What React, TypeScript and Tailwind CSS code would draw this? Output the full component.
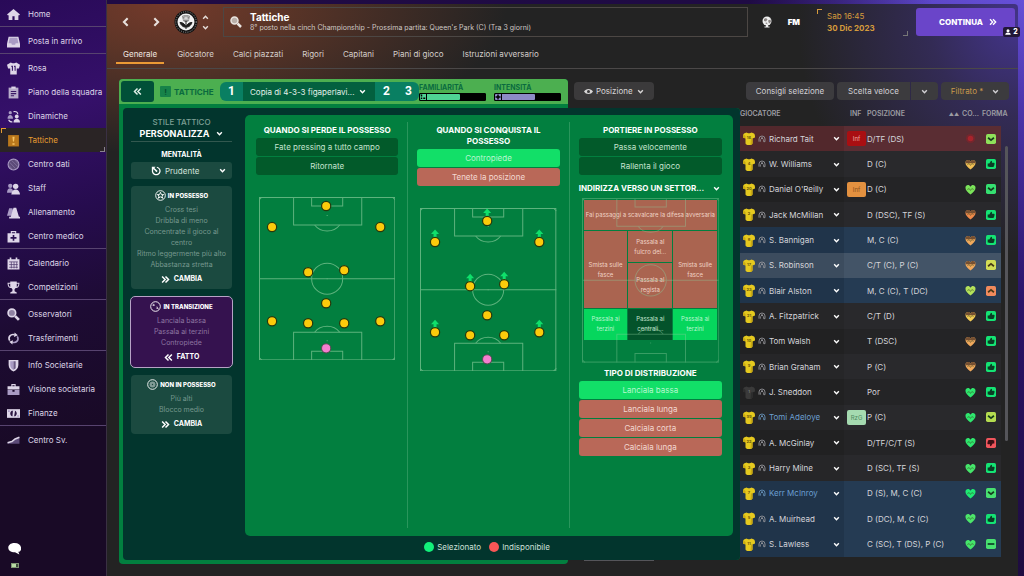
import type { ReactNode } from "react";

type IconProps = { children: ReactNode; className?: string };

function Icon({ children, className = "size-[13px]" }: IconProps) {
  return (
    <svg viewBox="0 0 24 24" className={`shrink-0 ${className}`} fill="currentColor" aria-hidden="true">
      {children}
    </svg>
  );
}

function Chevron({ dir = "down", className = "size-2" }: { dir?: "down" | "up" | "left" | "right"; className?: string }) {
  const paths = {
    down: "M4 8l8 8 8-8",
    up: "M4 16l8-8 8 8",
    left: "M16 3l-9 9 9 9",
    right: "M8 3l9 9-9 9",
  };
  return (
    <Icon className={className}>
      <path d={paths[dir]} fill="none" stroke="currentColor" strokeWidth="5" />
    </Icon>
  );
}

function DoubleChevron({ dir, className = "size-[9px]" }: { dir: "left" | "right"; className?: string }) {
  return (
    <Icon className={className}>
      <path
        d={dir === "left" ? "M12 4l-8 8 8 8M21 4l-8 8 8 8" : "M3 4l8 8-8 8M12 4l8 8-8 8"}
        fill="none"
        stroke="currentColor"
        strokeWidth="4"
      />
    </Icon>
  );
}

const tone = "#a99bc4";

const navGroups: { label: string; icon: ReactNode; active?: boolean }[][] = [
  [{ label: "Home", icon: <path d="M12 2L0 12l2 2 1-1v9h7v-7h4v7h7v-9l1 1 2-2z" /> }],
  [
    {
      label: "Posta in arrivo",
      icon: (
        <>
          <path d="M3 3h18l3 13v7H0v-7z" />
          <path d="M5 5h14l2 10h-5l-1 3H9l-1-3H3z" fill={tone} />
        </>
      ),
    },
  ],
  [
    {
      label: "Rosa",
      icon: (
        <>
          <path d="M7 1L0 5l2 7h4v11h12V12h4l2-7-7-4c-2 2-8 2-10 0z" />
          <path d="M8 7h3v9H9V9H8zM13 7h3v9h-2V9h-1z" fill="#3a1a66" />
        </>
      ),
    },
    {
      label: "Piano della squadra",
      icon: (
        <>
          <path d="M3 3h18v20H3z" fill="#b9aecb" />
          <path d="M8 1h8v4H8z" />
          <path d="M7 9h10v2H7zM7 13h10v2H7zM7 17h6v2H7z" fill="#3a1a66" />
        </>
      ),
    },
    {
      label: "Dinamiche",
      icon: (
        <>
          <circle cx="6" cy="5" r="3" fill={tone} />
          <path d="M1 16c0-9 10-9 10 0z" fill={tone} />
          <circle cx="18" cy="12" r="3.5" />
          <path d="M12 23c0-9 12-9 12 0z" />
          <path d="M12 3c5-1 8 1 8 5M3 18c1 3 3 4 7 4" fill="none" stroke="currentColor" strokeWidth="2" />
        </>
      ),
    },
    {
      label: "Tattiche",
      active: true,
      icon: (
        <>
          <path d="M2 2h20v21H2z" fill="#b9781c" />
          <path d="M10 5h4l-1 9h-2zM10 17h4v3h-4z" fill="#f6c463" />
        </>
      ),
    },
    {
      label: "Centro dati",
      icon: (
        <>
          <circle cx="12" cy="12" r="10" fill="#5c4b78" stroke="#a99bc4" strokeWidth="2" />
          <path d="M5 8l11 12M8 4l12 12M4 14l6 7M14 3l7 8" stroke="#8474a0" strokeWidth="1.5" />
        </>
      ),
    },
    {
      label: "Staff",
      icon: (
        <>
          <circle cx="6" cy="7" r="4" fill={tone} />
          <path d="M0 20c0-11 11-11 12 0z" fill={tone} />
          <circle cx="16" cy="8" r="5" />
          <path d="M8 23c1-7 5-9 8-9s7 2 8 9z" />
        </>
      ),
    },
    {
      label: "Allenamento",
      icon: (
        <>
          <path d="M4 4h6l4 14H0z" fill={tone} />
          <path d="M12 3h5l5 17h2v3H4v-3h3z" />
        </>
      ),
    },
    {
      label: "Centro medico",
      icon: (
        <>
          <path d="M7 2h10v4h6v17H1V6h6zM9 4v2h6V4z" fillRule="evenodd" />
          <path d="M10.500 9h3v4h4v3h-4v4h-3v-4h-4v-3h4z" fill="#2a1050" />
        </>
      ),
    },
  ],
  [
    {
      label: "Calendario",
      icon: (
        <>
          <path d="M1 4h4V1h3v3h8V1h3v3h4v19H1z" />
          <path d="M4 9h16M4 14h16M4 19h16M8 9v12M13 9v12M18 9v12" stroke="#4a3568" strokeWidth="1.3" />
        </>
      ),
    },
    {
      label: "Competizioni",
      icon: <path d="M6 1h12v2h5c0 7-3 10-7 10l-2 2v4l4 2v2H6v-2l4-2v-4l-2-2C4 13 1 10 1 3h5zM3 5c0 3 1 5 3 6V5zm15 0v6c2-1 3-3 3-6z" />,
    },
  ],
  [
    {
      label: "Osservatori",
      icon: (
        <>
          <circle cx="9" cy="9" r="7" fill="#8f82a3" stroke="currentColor" strokeWidth="3" />
          <path d="M15 15l7 7" stroke="currentColor" strokeWidth="5" />
        </>
      ),
    },
    {
      label: "Trasferimenti",
      icon: (
        <>
          <path d="M5 16C1 9 7 3 14 5" fill="none" stroke="currentColor" strokeWidth="3" />
          <path d="M19 8c4 7-2 13-9 11" fill="none" stroke={tone} strokeWidth="3" />
          <path d="M14 1l6 5-7 3zM10 23l-6-5 7-3z" />
        </>
      ),
    },
  ],
  [
    {
      label: "Info Societarie",
      icon: (
        <>
          <path d="M3 2h18v9c0 6-4 10-9 12-5-2-9-6-9-12z" />
          <path d="M12 4H6v7c0 4 2 7 6 9z" fill={tone} />
          <path d="M12 4h4v13l-4 3z" fill="#6c5c86" />
        </>
      ),
    },
    {
      label: "Visione societaria",
      icon: (
        <>
          <path d="M8 2h8v4h7v6H1V6h7zM10 4v2h4V4z" fillRule="evenodd" />
          <path d="M1 13h9v3h4v-3h9v9H1z" fill={tone} />
        </>
      ),
    },
    {
      label: "Finanze",
      icon: (
        <>
          <path d="M0 4h24v16H0z" />
          <path d="M9 7c-4 2-4 8 0 10h6c4-2 4-8 0-10z" fill="#2a1440" />
          <path d="M11 6h4l-2 12h-3z" />
          <path d="M2 6h3v3H2zM19 15h3v3h-3z" fill={tone} />
        </>
      ),
    },
  ],
  [
    {
      label: "Centro Sv.",
      icon: (
        <>
          <path d="M1 18v-2l8-1 7-6 7-2v11z" fill="#5c4b78" />
          <path d="M1 16l8-2 6-5 8-3" fill="none" stroke="currentColor" strokeWidth="3" />
        </>
      ),
    },
  ],
];

function Sidebar() {
  return (
    <aside className="flex w-[107px] shrink-0 flex-col border-r border-[#3a3043] bg-[linear-gradient(165deg,#290a58_0%,#35106a_20%,#260c4e_38%,#1d0b33_55%,#190a26_75%)] pt-[2px]">
      <nav aria-label="Menu principale">
        {navGroups.map((group, i) => (
          <ul key={i} className={i ? "border-t border-[#57436f] pt-[2px]" : ""}>
            {group.map((item) => (
              <li key={item.label}>
                <a
                  href="#"
                  className={
                    item.active
                      ? "relative flex h-6 items-center gap-2 bg-[#2a2425] pl-[7px] text-[8px] text-[#e69c31]"
                      : "relative flex h-6 items-center gap-2 pl-[7px] text-[8px] text-[#ded6e8]"
                  }
                >
                  {item.active && (
                    <>
                      <span className="absolute top-0 left-px size-[5px] border-t border-l border-[#e69c31]" />
                      <span className="absolute right-px bottom-0 size-[5px] border-r border-b border-[#8a8290]" />
                    </>
                  )}
                  <Icon className="size-[13px]">{item.icon}</Icon>
                  <span className="whitespace-nowrap">{item.label}</span>
                </a>
              </li>
            ))}
          </ul>
        ))}
      </nav>
      <div className="mt-auto flex flex-col items-start gap-2 pb-[8px] pl-2 text-white">
        <button type="button" aria-label="Messaggi" className="flex">
          <Icon className="size-[13px]">
            <path d="M12 2c15 0 15 16 7 16l2 5-8-4C-4 19-3 2 12 2z" />
          </Icon>
        </button>
        <span className="ml-[3px] flex h-[5px] w-2 border border-[#7f9474] bg-[#3d4a3c]">
          <span className="w-1 bg-[#b8dba4]" />
        </span>
      </div>
    </aside>
  );
}

function Crest() {
  return (
    <svg viewBox="0 0 48 48" className="size-6 shrink-0" aria-label="Stemma del club" role="img">
      <circle cx="24" cy="24" r="23" fill="#111" />
      <circle cx="24" cy="24" r="20.500" fill="none" stroke="#9a9a9a" strokeWidth="2" strokeDasharray="2 2.500" />
      <circle cx="24" cy="24" r="17" fill="#f1f1f1" />
      <path d="M16 12c5-3 11-3 16 0l-2 9c-3 4-9 4-12 0z" fill="#8a8a8a" />
      <path d="M19 13l10 6M29 13l-10 6M19 18h10M24 11v9" stroke="#e4e4e4" strokeWidth="1.500" />
      <path d="M24 22v16M24 34c-5 1-10-3-12-9 6 0 10 3 12 9zM24 34c5 1 10-3 12-9-6 0-10 3-12 9z" fill="#1c1c1c" stroke="#1c1c1c" strokeWidth="2" />
    </svg>
  );
}

const tabs = ["Generale", "Giocatore", "Calci piazzati", "Rigori", "Capitani", "Piani di gioco", "Istruzioni avversario"];

function Header() {
  return (
    <header className="border-b border-[#4b4848]">
      <div className="flex h-9 items-center pr-[3px]">
        <button type="button" aria-label="Indietro" className="ml-[14px] text-[#e8e0dc]">
          <Chevron dir="left" className="size-[10px]" />
        </button>
        <button type="button" aria-label="Avanti" className="ml-5 text-[#e8e0dc]">
          <Chevron dir="right" className="size-[10px]" />
        </button>
        <span className="ml-[13px]">
          <Crest />
        </span>
        <span className="ml-1 flex flex-col gap-[3px] text-[#e8e0dc]">
          <button type="button" aria-label="Squadra precedente" className="flex">
            <Chevron dir="up" className="size-[7px]" />
          </button>
          <button type="button" aria-label="Squadra successiva" className="flex">
            <Chevron dir="down" className="size-[7px]" />
          </button>
        </span>
        <div className="ml-[14px] flex h-[30px] min-w-0 flex-1 items-center gap-2 border border-[#4c4744] pl-[6px]">
          <button type="button" aria-label="Cerca" className="text-[#e9e4e0]">
            <Icon className="size-3">
              <circle cx="9" cy="9" r="7" fill="#b9afa9" stroke="currentColor" strokeWidth="3" />
              <path d="M15 15l7 7" stroke="currentColor" strokeWidth="5" />
            </Icon>
          </button>
          <div className="min-w-0">
            <h1 className="text-[10px] leading-3 font-bold text-white">Tattiche</h1>
            <p className="truncate text-[7px] leading-[10px] text-[#cfc9c5]">
              8° posto nella cinch Championship - Prossima partita: Queen's Park (C) (Tra 3 giorni)
            </p>
          </div>
        </div>
        <button type="button" aria-label="Mondo" className="ml-[13px] text-[#eeeeee]">
          <Icon className="size-3">
            <circle cx="12" cy="10" r="9" />
            <path d="M6 6l4-2 3 3-3 4-4-1zM14 9l5-2 1 5-4 3zM8 14l4-1 1 4" fill="#8a8583" />
            <path d="M10 18h4v3h3v2H7v-2h3z" />
          </Icon>
        </button>
        <a href="#" className="ml-[15px] text-[8px] font-black text-white">
          FM
        </a>
        <div className="relative ml-[17px] flex h-[27px] w-[91px] flex-col justify-center pl-[10px] text-[#d59b3c]">
          <span className="absolute top-0 left-0 size-[5px] border-t border-l border-[#d59b3c]" />
          <span className="absolute right-0 bottom-0 size-[5px] border-r border-b border-[#777]" />
          <span className="text-[8px] leading-3">Sab 16:45</span>
          <span className="text-[8px] leading-3 font-bold">30 Dic 2023</span>
        </div>
        <button
          type="button"
          className="relative ml-2 flex h-7 w-[99px] items-center justify-end gap-[6px] rounded-[3px] bg-[#6a45c9] pr-[18px] text-[8px] font-extrabold text-white"
        >
          CONTINUA
          <DoubleChevron dir="right" className="size-2" />
          <span className="absolute -right-[5px] -bottom-px flex h-[10px] w-[17px] items-center justify-center gap-[2px] rounded-[2px] bg-[#221838] text-[7px]">
            <Icon className="size-[6px]">
              <circle cx="12" cy="7" r="6" />
              <path d="M1 23c0-12 22-12 22 0z" />
            </Icon>
            2
          </span>
        </button>
      </div>
      <nav aria-label="Sezioni" className="flex h-7 items-start gap-[7px] pl-[9px]">
        {tabs.map((tab, i) => (
          <a
            key={tab}
            href="#"
            className={
              i === 0
                ? "flex h-6 items-center border-b-2 border-[#eb9a35] px-[7px] pt-[5px] text-[8px] whitespace-nowrap text-[#f0e6e0]"
                : "flex h-6 items-center border-b-2 border-transparent px-[6px] pt-[5px] text-[8px] whitespace-nowrap text-[#d5cfcb]"
            }
          >
            {tab}
          </a>
        ))}
      </nav>
    </header>
  );
}

function Meter({ label, color, width, icon }: { label: string; color: string; width: string; icon: ReactNode }) {
  return (
    <div className="w-[67px] shrink-0">
      <p className="text-[7px] leading-[10px] font-bold whitespace-nowrap text-[#0a6b3f]">{label}</p>
      <div className="flex h-2 rounded-[1px] border border-black bg-black">
        <span className={`flex items-center rounded-[1px] ${color} ${width}`}>
          <span className="flex h-full w-[7px] items-center border-r border-black text-black">{icon}</span>
        </span>
      </div>
    </div>
  );
}

const slotClass = "shrink-0 font-[Roboto,sans-serif] text-[12px] leading-[19px] font-bold";

function TacticsBar() {
  return (
    <div className="flex h-[25px] shrink-0 items-center rounded-t-[4px] bg-[#4caf50] pr-[7px] pl-[2px]">
      <button
        type="button"
        aria-label="Riduci pannello"
        className="flex h-[21px] w-[33px] shrink-0 items-center justify-center rounded-[3px] bg-[#015038] text-[#e0f0e8]"
      >
        <DoubleChevron dir="left" />
      </button>
      <span className="ml-[6px] flex size-[11px] shrink-0 items-center justify-center rounded-[1px] bg-[#178249] text-[8px] font-bold text-[#04512f]">
        !
      </span>
      <span className="ml-[3px] w-[46px] shrink-0 text-[8px] font-bold text-[#0a6b3f]">TATTICHE</span>
      <div className="flex h-[19px] min-w-0 flex-1 overflow-hidden rounded-[6px] bg-[#097f62] text-white">
        <button type="button" className={`${slotClass} w-[23px]`}>
          1
        </button>
        <div className="relative flex min-w-0 flex-1 items-center bg-[#03603f]">
          <select
            aria-label="Tattica"
            className="h-full w-full appearance-none bg-transparent pr-[14px] pl-[7px] text-[8px] text-[#e3f1ea] outline-none"
          >
            <option>Copia di 4-3-3 figaperlavi...</option>
          </select>
          <span className="pointer-events-none absolute right-[9px]">
            <Chevron className="size-[7px]" />
          </span>
        </div>
        <button type="button" className={`${slotClass} w-[23px]`}>
          2
        </button>
        <button type="button" className={`${slotClass} w-[21px]`}>
          3
        </button>
      </div>
      <div className="flex shrink-0 gap-2">
        <Meter
          label="FAMILIARITÀ"
          color="bg-[#4fd394]"
          width="w-10"
          icon={
            <Icon className="size-[6px]">
              <path d="M3 2h6v8H3zM3 14h6v6H3zM13 14h8v6h-8z" />
            </Icon>
          }
        />
        <Meter
          label="INTENSITÀ"
          color="bg-[#8d8bc6]"
          width="w-10"
          icon={
            <Icon className="size-[6px]">
              <path d="M9 2h6v7h7v6h-7v7H9v-7H2V9h7z" />
            </Icon>
          }
        />
      </div>
    </div>
  );
}

const phases = [
  {
    title: "IN POSSESSO",
    lines: ["Cross tesi", "Dribbla di meno", "Concentrate il gioco al centro", "Ritmo leggermente più alto", "Abbastanza stretta"],
    action: "CAMBIA",
    icon: (
      <path
        d="M12 5l2 5h5l-4 3 2 5-5-3-5 3 2-5-4-3h5z"
        fill="none"
      />
    ),
  },
  {
    title: "IN TRANSIZIONE",
    lines: ["Lanciala bassa", "Passala ai terzini", "Contropiede"],
    action: "FATTO",
    active: true,
    icon: <path d="M5 9h6M8 6v5M13 15l5 2M15 12l3 5" opacity="0.7" />,
  },
  {
    title: "NON IN POSSESSO",
    lines: ["Più alti", "Blocco medio"],
    action: "CAMBIA",
    icon: <circle cx="12" cy="12" r="4" opacity="0.45" strokeWidth="5" />,
  },
];

function StylePanel() {
  return (
    <div className="flex w-[101px] shrink-0 flex-col text-center">
      <p className="pt-[2px] text-[8px] leading-[11px] font-medium text-[#7fa096]">STILE TATTICO</p>
      <button
        type="button"
        className="flex h-[14px] items-center justify-center gap-[7px] border-b border-[#32584f] pb-[3px] text-[9px] leading-[11px] font-bold text-white"
      >
        PERSONALIZZA
        <Chevron className="size-[7px]" />
      </button>
      <label htmlFor="mentality" className="mt-[7px] text-[7px] leading-[11px] font-bold text-white">
        MENTALITÀ
      </label>
      <div className="relative mt-[2px] mb-[7px] flex h-[17px] items-center rounded-[3px] bg-[#1b4a40] text-white">
        <span className="pointer-events-none absolute left-5">
          <Icon className="size-[10px]">
            <path d="M5 7a9 9 0 1 0 9-4" fill="none" stroke="currentColor" strokeWidth="3" />
            <path d="M2 2h9l-3 3 8 7-3 3-7-8-4 3z" />
          </Icon>
        </span>
        <select
          id="mentality"
          className="h-full w-full appearance-none bg-transparent pl-[34px] text-[8px] text-[#d3e2dc] outline-none"
        >
          <option>Prudente</option>
        </select>
        <span className="pointer-events-none absolute right-[6px]">
          <Chevron className="size-[7px]" />
        </span>
      </div>
      <div className="flex flex-col gap-2">
        {phases.map((p) => (
          <section
            key={p.title}
            className={
              p.active
                ? "rounded-[4px] bg-[#35124f] text-[#8d75a0] outline outline-[#b7a3c6]"
                : "rounded-[4px] bg-[#1b4a40] text-[#76988e]"
            }
          >
            <h3 className="flex h-[18px] items-center justify-center gap-[2px] text-[6px] font-extrabold text-white">
              <svg viewBox="0 0 24 24" className="size-[11px]" fill="none" stroke="currentColor" strokeWidth="2" aria-hidden="true">
                <circle cx="12" cy="12" r="10.500" />
                {p.icon}
              </svg>
              {p.title}
            </h3>
            <div className="px-1 text-[7px] leading-[11px]">
              {p.lines.map((l) => (
                <p key={l}>{l}</p>
              ))}
            </div>
            <button type="button" className="flex h-[19px] w-full items-center justify-center gap-1 text-[7px] font-bold text-white">
              <DoubleChevron dir={p.active ? "left" : "right"} className="size-[9px]" />
              {p.action}
            </button>
          </section>
        ))}
      </div>
    </div>
  );
}

function PitchLines() {
  return (
    <g fill="none" stroke="#8fcf9f" strokeWidth="1" opacity="0.65">
      <rect x="0.500" y="0.500" width="135" height="162" />
      <path d="M0 81.500h136M34.500 0v28h68V0M52.500 0v9h31V0M34.500 163v-28h68v28M52.500 163v-9h31v9" />
      <path d="M55.500 28c6 8 19 8 25 0M55.500 135c6-8 19-8 25 0" />
      <circle cx="68" cy="81.500" r="15.500" />
      <path d="M0 3l3-3M133 0l3 3M0 160l3 3M133 163l3-3" />
      <path d="M67.500 18.500h1M67.500 81.500h1M67.500 143.500h1" />
    </g>
  );
}

type Dot = [number, number, boolean?];

function Pitch({ dots, keeper }: { dots: Dot[]; keeper: [number, number] }) {
  return (
    <svg viewBox="0 0 136 163" className="mt-[22px] w-full px-[3px]" role="img" aria-label="Disposizione in campo">
      <PitchLines />
      {dots.map(([x, y, arrow]) => (
        <g key={`${x}-${y}`}>
          {arrow && <path d={`M${x} ${y - 12.5}l4 4.500h-2.500v4h-3v-4h-2.500z`} fill="#0fe06b" />}
          <circle cx={x} cy={y} r="4.600" fill="#fccb0b" stroke="#27380c" strokeWidth="1.200" />
        </g>
      ))}
      <circle cx={keeper[0]} cy={keeper[1]} r="4.600" fill="#f47fd0" stroke="#5a4a52" strokeWidth="1" />
    </svg>
  );
}

type Tone = "idle" | "on" | "off";
const toneClass: Record<Tone, string> = {
  idle: "bg-[#025a2a] text-[#c5e3cf]",
  on: "bg-[#12df68] text-[#b9f7d0]",
  off: "bg-[#b96858] text-[#f3d9d2]",
};

function Options({ items }: { items: [string, Tone][] }) {
  return (
    <div className="mt-[2px] flex flex-col gap-px">
      {items.map(([label, t]) => (
        <button key={label} type="button" className={`h-[18px] rounded-[3px] text-[8px] ${toneClass[t]}`}>
          {label}
        </button>
      ))}
    </div>
  );
}

function Heading({ children }: { children: ReactNode }) {
  return <h2 className="text-center text-[8px] leading-[11px] font-bold text-white">{children}</h2>;
}

const zoneClass = "flex items-center justify-center px-1 text-center text-[6px] leading-[10px]";
const zoneOff = "bg-[#aa6450] text-[#f0d3c6]";

function Zones() {
  return (
    <div className="relative mx-[3px] mt-1 aspect-[136/163]">
      <div className="grid h-full grid-cols-3 grid-rows-[31fr_31fr_46fr_32fr_20fr] gap-px p-[2px]">
        <button type="button" className={`${zoneClass} ${zoneOff} col-span-3 whitespace-nowrap`}>
          Fai passaggi a scavalcare la difesa avversaria
        </button>
        <button type="button" className={`${zoneClass} ${zoneOff} row-span-2`}>
          Smista sulle fasce
        </button>
        <button type="button" className={`${zoneClass} ${zoneOff}`}>
          Passala al fulcro del...
        </button>
        <button type="button" className={`${zoneClass} ${zoneOff} row-span-2`}>
          Smista sulle fasce
        </button>
        <button type="button" className={`${zoneClass} ${zoneOff}`}>
          Passala al regista
        </button>
        <button type="button" className={`${zoneClass} bg-[#06d65d] text-[#b9f7d0]`}>
          Passala ai terzini
        </button>
        <button type="button" className={`${zoneClass} bg-[#04532b] text-[#c5e3cf]`}>
          Passala ai centrali...
        </button>
        <button type="button" className={`${zoneClass} bg-[#06d65d] text-[#b9f7d0]`}>
          Passala ai terzini
        </button>
      </div>
      <svg viewBox="0 0 136 163" className="pointer-events-none absolute inset-0 size-full opacity-60" aria-hidden="true">
        <PitchLines />
      </svg>
    </div>
  );
}

const lostShape: Dot[] = [
  [67, 9], [13, 30], [121, 30], [49, 75], [85, 73], [67, 106], [13, 124], [121, 124], [49, 126], [85, 126],
];
const wonShape: Dot[] = [
  [67, 13, true], [15, 34, true], [119, 34, true], [50, 78, true], [84, 76, true], [67, 107],
  [15, 124, true], [119, 124, true], [50, 127], [84, 127],
];

function Board() {
  return (
    <div className="flex min-w-0 flex-1 flex-col">
      <div className="grid flex-1 grid-cols-3 divide-x divide-[#2a965c] rounded-[5px] bg-[#027f3f] px-[2px] pt-[7px] pb-2">
        <section className="px-[9px] pt-[3px]">
          <Heading>QUANDO SI PERDE IL POSSESSO</Heading>
          <Options items={[["Fate pressing a tutto campo", "idle"], ["Ritornate", "idle"]]} />
          <Pitch dots={lostShape} keeper={[67, 151]} />
        </section>
        <section className="px-[9px] pt-[3px]">
          <Heading>
            QUANDO SI CONQUISTA IL
            <br />
            POSSESSO
          </Heading>
          <Options items={[["Contropiede", "on"], ["Tenete la posizione", "off"]]} />
          <Pitch dots={wonShape} keeper={[67, 151]} />
        </section>
        <section className="px-[9px] pt-[3px]">
          <Heading>PORTIERE IN POSSESSO</Heading>
          <Options items={[["Passa velocemente", "idle"], ["Rallenta il gioco", "idle"]]} />
          <button
            type="button"
            className="mt-2 flex w-full items-center justify-between pr-[2px] text-[8px] leading-[11px] font-bold whitespace-nowrap text-white"
          >
            INDIRIZZA VERSO UN SETTOR...
            <Chevron className="size-[7px]" />
          </button>
          <Zones />
          <div className="mt-[5px]">
            <Heading>TIPO DI DISTRIBUZIONE</Heading>
            <Options
              items={[["Lanciala bassa", "on"], ["Lanciala lunga", "off"], ["Calciala corta", "off"], ["Calciala lunga", "off"]]}
            />
          </div>
        </section>
      </div>
      <div className="flex h-6 shrink-0 items-center justify-center gap-2 pr-1 pb-[3px] text-[8px] text-[#cfe0d9]">
        <span className="flex items-center gap-[3px]">
          <span className="size-[10px] rounded-full bg-[#12f07a]" />
          Selezionato
        </span>
        <span className="flex items-center gap-[3px]">
          <span className="size-[10px] rounded-full bg-[#f75656]" />
          Indisponibile
        </span>
      </div>
    </div>
  );
}

type Form = "thumb" | "down" | "up" | "bad" | "flat";
type Player = {
  n: string;
  name: string;
  pos: string;
  heart: string;
  form: Form;
  formColor: string;
  row?: "red" | "blue" | "light";
  badge?: { text: string; cls: string };
  link?: boolean;
  keeper?: boolean;
};

const G = "#14e474";
const O = "#f0a95c";
const players: Player[] = [
  { n: "16", name: "Richard Tait", pos: "D/TF (DS)", heart: "injured", form: "down", formColor: "#8fe05a", row: "red", badge: { text: "Inf", cls: "bg-[#a90f12] text-[#f0a8a4]" } },
  { n: "4", name: "W. Williams", pos: "D (C)", heart: "#f2bf55", form: "thumb", formColor: G },
  { n: "20", name: "Daniel O'Reilly", pos: "D (C)", heart: "#7be45a", form: "down", formColor: "#35e070", badge: { text: "Inf", cls: "bg-[#e39140] text-[#8a4f1c]" } },
  { n: "2", name: "Jack McMillan", pos: "D (DSC), TF (S)", heart: "#f08a4a", form: "thumb", formColor: G },
  { n: "8", name: "S. Bannigan", pos: "M, C (C)", heart: O, form: "thumb", formColor: G, row: "blue" },
  { n: "17", name: "S. Robinson", pos: "C/T (C), P (C)", heart: O, form: "up", formColor: "#d3dc55", row: "light" },
  { n: "23", name: "Blair Alston", pos: "M, C (C), T (DC)", heart: "#b4e25a", form: "up", formColor: "#f08a5c", row: "blue" },
  { n: "21", name: "A. Fitzpatrick", pos: "C/T (D)", heart: "#f4cc55", form: "thumb", formColor: G },
  { n: "10", name: "Tom Walsh", pos: "T (DSC)", heart: O, form: "thumb", formColor: G },
  { n: "9", name: "Brian Graham", pos: "P (C)", heart: O, form: "thumb", formColor: G },
  { n: "1", name: "J. Sneddon", pos: "Por", heart: "#2ee86e", form: "thumb", formColor: G, keeper: true },
  { n: "99", name: "Tomi Adeloye", pos: "P (C)", heart: "#2ee86e", form: "down", formColor: "#b4dc50", badge: { text: "RzG", cls: "bg-[#a5dab0] text-[#4d8a60]" }, link: true },
  { n: "22", name: "A. McGinlay", pos: "D/TF/C/T (S)", heart: "#2ee86e", form: "bad", formColor: "#f0555c" },
  { n: "3", name: "Harry Milne", pos: "D (SC), TF (S)", heart: "#45e66a", form: "thumb", formColor: G },
  { n: "7", name: "Kerr McInroy", pos: "D (S), M, C (C)", heart: "#1fea74", form: "down", formColor: "#48e070", row: "blue", link: true },
  { n: "5", name: "A. Muirhead", pos: "D (DC), M, C (C)", heart: "#4ce66a", form: "thumb", formColor: G, row: "blue" },
  { n: "11", name: "S. Lawless", pos: "C (SC), T (DS), P (C)", heart: "#45e66a", form: "flat", formColor: "#48e070", row: "blue" },
];

function Kit({ n, keeper }: { n: string; keeper?: boolean }) {
  return (
    <svg viewBox="0 0 24 26" className="h-[13px] w-3" aria-label={`Maglia ${n}`} role="img">
      <path
        d="M7 1L2 3C0 5 0 8 0 11l5 2v9c0 3 2 4 7 4s7-1 7-4v-9l5-2c0-3 0-6-2-8l-5-2c-2 2-8 2-10 0z"
        fill={keeper ? "#3a3a3a" : "#e6c91f"}
      />
      <path d="M5 13L0 11c0-2 0-4 1-6l4 3zM16 13l3-1v10c0 2-1 3-4 4z" fill={keeper ? "#2c2c2c" : "#c9a812"} />
      <text x="12" y="14" textAnchor="middle" fontSize="8" fontWeight="700" fill={keeper ? "#777" : "#6b560a"}>
        {n}
      </text>
    </svg>
  );
}

function Heart({ color }: { color: string }) {
  if (color === "injured") {
    return (
      <svg viewBox="0 0 24 24" className="size-[11px]" role="img" aria-label="Infortunato">
        <circle cx="12" cy="12" r="10" fill="#8f2027" opacity="0.5" />
        <circle cx="12" cy="12" r="6" fill="#a8242c" />
      </svg>
    );
  }
  const tired = ["#f2bf55", "#f08a4a", O, "#f4cc55"].includes(color);
  return (
    <svg viewBox="0 0 24 24" className="size-[11px]" role="img" aria-label="Condizione">
      <path d="M12 23C5 17 1 13 1 8c0-6 8-8 11-2 3-6 11-4 11 2 0 5-4 9-11 15z" fill={color} />
      {tired && <path d="M1 9c0-7 8-9 11-3 3-6 11-4 11 3z" fill="#765032" />}
      <path d="M5 12l4-2 3 4 3-4 4 2" fill="none" stroke="#3b4a22" strokeWidth="1.500" opacity="0.8" />
    </svg>
  );
}

function FormIcon({ form, color }: { form: Form; color: string }) {
  const thumb = "M4 11h4l4-7c3 0 3 3 2 5h5c2 0 2 3 1 4 1 1 0 3-1 3 0 2-1 3-2 3H9c-2 0-2-1-5-1z";
  return (
    <svg viewBox="0 0 24 24" className="size-[10px]" role="img" aria-label="Forma">
      <rect width="24" height="24" rx="4" fill={color} />
      {form === "thumb" && <path d={thumb} fill="#0b3d25" />}
      {form === "bad" && <path d={thumb} transform="rotate(180 12 12)" fill="#3d0f14" />}
      {form === "down" && <path d="M5 9l7 6 7-6" fill="none" stroke="#173d1e" strokeWidth="4" />}
      {form === "up" && <path d="M5 15l7-6 7 6" fill="none" stroke="#4a3a18" strokeWidth="4" />}
      {form === "flat" && <path d="M4 12h16" stroke="#0b3d25" strokeWidth="4" />}
    </svg>
  );
}

const rowTone = {
  red: ["bg-[#52282c]", "bg-[#5a2d33]"],
  blue: ["bg-[#20344a]", "bg-[#253b53]"],
  light: ["bg-[#3c4c5e]", "bg-[#435467]"],
  even: ["bg-[#212122]", "bg-[#242426]"],
  odd: ["bg-[#262628]", "bg-[#29292c]"],
};

function Squad() {
  return (
    <div className="flex gap-1">
      <table className="h-[451px] min-w-0 flex-1 border-collapse text-[8px] text-[#d5d5da]">
        <thead>
          <tr className="h-5 text-left align-top text-[7px] leading-4 text-[#9c9ca2]">
            <th className="font-semibold" colSpan={2}>GIOCATORE</th>
            <th className="w-[23px] pl-[6px] font-semibold">INF</th>
            <th className="font-semibold">POSIZIONE</th>
            <th className="w-[30px] font-semibold whitespace-nowrap">
              <span className="flex justify-end gap-[3px] pr-[3px]">
                <span className="text-[5px]">▲▲</span>CO...
              </span>
            </th>
            <th className="w-[19px] font-semibold">
              <span className="block w-0">FORMA</span>
            </th>
          </tr>
        </thead>
        <tbody>
          {players.map((p, i) => {
            const [a, b] = rowTone[p.row ?? (i % 2 ? "odd" : "even")];
            return (
              <tr key={p.name} className="h-[25px]">
                <td className={`${a} pl-[3px]`}>
                  <span className="flex items-center gap-[3px] whitespace-nowrap">
                    <Kit n={p.n} keeper={p.keeper} />
                    <Icon className={p.link ? "size-2 text-[#6a96bd]" : "size-2 text-[#99999e]"}>
                      <path d="M3 20v-8a9 9 0 0 1 18 0v8h-4v-7M7 20v-7" fill="none" stroke="currentColor" strokeWidth="2.500" />
                      <circle cx="12" cy="10" r="3" />
                    </Icon>
                    <a href="#" className={p.link ? "text-[#6b9fd0]" : ""}>
                      {p.name}
                    </a>
                  </span>
                </td>
                <td className={`${a} w-4`}>
                  <button type="button" aria-label={`Opzioni per ${p.name}`} className="flex h-4 w-full items-center justify-center text-white">
                    <Chevron className="size-[7px]" />
                  </button>
                </td>
                <td className={`${b} pr-px pl-[3px]`}>
                  {p.badge && (
                    <span className={`flex h-[15px] w-[19px] items-center justify-center rounded-[2px] text-[6px] ${p.badge.cls}`}>
                      {p.badge.text}
                    </span>
                  )}
                </td>
                <td className={`${b} whitespace-nowrap`}>{p.pos}</td>
                <td className={b}>
                  <span className="flex justify-end pr-[6px]">
                    <Heart color={p.heart} />
                  </span>
                </td>
                <td className={b}>
                  <span className="flex justify-end pr-[5px]">
                    <FormIcon form={p.form} color={p.formColor} />
                  </span>
                </td>
              </tr>
            );
          })}
        </tbody>
      </table>
      <div className="mt-10 h-[295px] w-[3px] shrink-0 rounded bg-[#55555a]" />
    </div>
  );
}

const pill = "flex h-[18px] items-center justify-center gap-[9px] bg-[#3c3b3e] text-[8px] text-[#d2d0d4]";

export default function App() {
  return (
    <div className="flex min-h-screen overflow-hidden bg-[linear-gradient(200deg,#6650d8_0%,#4a34a8_12%,#2a1468_32%,#1e0c40_60%,#3a1774_100%)] font-[Inter,'Noto_Sans',sans-serif]">
      <Sidebar />
      <div className="flex min-w-0 flex-1 flex-col bg-[linear-gradient(90deg,#200b44_0%,#1f0b44_70%,transparent_90%)] pt-1">
        <main className="mr-[6px] flex flex-1 flex-col rounded-tr-[4px] bg-[#232323] bg-[radial-gradient(ellipse_340px_150px_at_60px_0px,#743a2b_0%,#5a3427_35%,transparent_100%),radial-gradient(ellipse_220px_230px_at_100%_20px,#43348a_0%,#332b55_40%,transparent_100%)]">
          <Header />
          <div className="flex flex-1 pt-[10px] pb-3 pl-3">
            <div className="flex min-w-0 flex-1 flex-col">
              <div className="flex">
                <div className="flex min-w-0 flex-1 flex-col rounded-t-[4px] bg-[#027f3f] pb-1">
                  <TacticsBar />
                </div>
                <div className="flex w-[172px] shrink-0 items-start pt-[3px] pl-[6px]">
                  <div className="relative flex h-[18px] w-[80px] items-center rounded-[4px] bg-[#3b3a3b] text-[#d8d6d6]">
                    <span className="pointer-events-none absolute left-[10px]">
                      <Icon className="size-[9px]">
                        <path d="M0 12C5 3 19 3 24 12c-5 9-19 9-24 0z" />
                        <circle cx="12" cy="12" r="4" fill="#3b3a3b" />
                      </Icon>
                    </span>
                    <select aria-label="Visualizza" className="h-full w-full appearance-none bg-transparent pl-[22px] text-[8px] outline-none">
                      <option>Posizione</option>
                    </select>
                    <span className="pointer-events-none absolute right-[10px]">
                      <Chevron className="size-[7px]" />
                    </span>
                  </div>
                </div>
              </div>
              <div className="flex flex-1 rounded-r-[4px] bg-[#027f3f] pl-1">
                <div className="flex min-w-0 flex-1 gap-[13px] rounded-[4px] bg-[#02352d] pt-[7px] pr-[7px] pl-2">
                  <StylePanel />
                  <Board />
                </div>
              </div>
              <div className="flex h-1">
                <span className="min-w-0 flex-1 rounded-b-[4px] bg-[#027f3f]" />
                <span className="ml-4 h-px w-[70px] bg-[#55555a]" />
                <span className="w-[86px] shrink-0" />
              </div>
            </div>
            <div className="w-[278px] shrink-0">
              <div className="flex gap-[3px] pt-[3px] pr-[9px] pl-[6px]">
                <button type="button" className={`${pill} w-[88px] rounded-[4px]`}>
                  Consigli selezione
                </button>
                <div className="flex gap-px">
                  <button type="button" className={`${pill} w-[73px] rounded-l-[4px]`}>
                    Scelta veloce
                  </button>
                  <button type="button" aria-label="Altre scelte" className={`${pill} w-[27px] rounded-r-[4px]`}>
                    <Chevron className="size-[7px]" />
                  </button>
                </div>
                <button type="button" className={`${pill} w-[68px] rounded-[4px]`}>
                  <span className="text-[#c9994c]">Filtrato *</span>
                  <Chevron className="size-[7px]" />
                </button>
              </div>
              <div className="pt-[6px] pr-[10px]">
                <Squad />
              </div>
            </div>
          </div>
        </main>
      </div>
    </div>
  );
}
